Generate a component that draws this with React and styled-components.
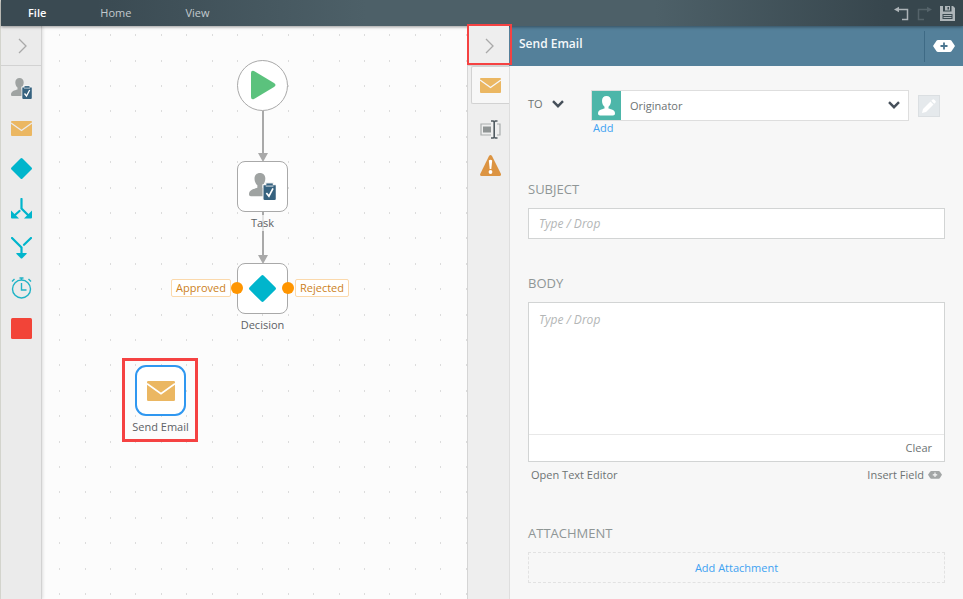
import { useState } from "react";
import styled, { createGlobalStyle } from "styled-components";

const GlobalStyle = createGlobalStyle`
  * {
    box-sizing: border-box;
  }
  body {
    margin: 0;
    font-family: "Open Sans", "Noto Sans", sans-serif;
    font-size: 11px;
    line-height: 16px;
    color: #6d7373;
  }
  button, input, select, textarea {
    font: inherit;
    color: inherit;
  }
  svg {
    display: block;
  }
`;

const Page = styled.div`
  min-height: 100vh;
  display: flex;
  flex-direction: column;
  border-left: 1px solid #d8d9d2;
`;

const MenuBar = styled.header`
  height: 26px;
  padding: 0 8px 0 27px;
  display: flex;
  align-items: center;
  justify-content: space-between;
  background: linear-gradient(to right, #3a4a52 10%, #4d6068 38%, #4d6068 68%, #37464d 92%);
  box-shadow: 0 1px 3px rgba(0, 0, 0, 0.4);
  position: relative;
  z-index: 2;
`;

const Menu = styled.nav`
  display: flex;
  gap: 54px;
`;

const IconButton = styled.button`
  display: flex;
  align-items: center;
  justify-content: center;
  padding: 0;
  border: none;
  background: none;
  cursor: pointer;
`;

const MenuItem = styled(IconButton)`
  font-weight: ${(props) => (props.$active ? 600 : 400)};
  color: ${(props) => (props.$active ? "#ffffff" : "#c3cace")};
`;

const MenuActions = styled.div`
  display: flex;
  align-items: center;
  gap: 8px;
`;

const Workspace = styled.main`
  flex: 1;
  display: grid;
  grid-template-columns: 41px minmax(0, 425fr) 42px minmax(0, 454fr);
`;

const Toolbar = styled.aside`
  background-color: #ebebeb;
  border-right: 1px solid #d2d2d2;
  box-shadow: 1px 0 3px rgba(0, 0, 0, 0.12);
  position: relative;
  z-index: 1;
`;

const Collapse = styled(IconButton)`
  width: 100%;
  height: 40px;
  padding-left: 2px;
  border-bottom: 1px solid #d2d2d2;
`;

const ToolList = styled.div`
  display: flex;
  flex-direction: column;
  padding: 2px 0 0 1px;
`;

const Tool = styled(IconButton)`
  height: 40px;
`;

const Canvas = styled.section`
  position: relative;
  overflow: hidden;
  background-color: #fcfcfc;
`;

const Drawing = styled.svg`
  position: absolute;
  left: 0;
  top: 0;
  width: 100%;
  height: 100%;
`;

const Node = styled.div`
  position: absolute;
  left: ${(props) => props.$x}px;
  top: ${(props) => props.$y}px;
  width: 77px;
  display: flex;
  flex-direction: column;
  align-items: center;
  gap: 3px;
`;

const Shape = styled.div`
  width: 51px;
  height: 51px;
  display: flex;
  align-items: center;
  justify-content: center;
  background-color: #ffffff;
  border: ${(props) => (props.$selected ? "2px solid #2f97f0" : "1px solid #a9a9a9")};
  border-radius: ${(props) => (props.$round ? "50%" : props.$selected ? "11px" : "8px")};
`;

const NodeLabel = styled.span`
  color: #5c6165;
  background-color: rgba(252, 252, 252, 0.7);
`;

const Outcome = styled.span`
  position: absolute;
  left: ${(props) => props.$x}px;
  top: 253px;
  height: 18px;
  padding: 0 4px;
  border: 1px solid #fbd9ac;
  border-radius: 2px;
  background-color: #ffffff;
  color: #cc7f1c;
`;

const Dot = styled.span`
  position: absolute;
  left: ${(props) => props.$x}px;
  top: 256px;
  width: 12px;
  height: 12px;
  border-radius: 50%;
  background-color: #ff9500;
`;

const NodeFrame = styled.div`
  position: absolute;
  left: 80px;
  top: 332px;
  width: 76px;
  height: 84px;
  border: 3px solid #f54242;
`;

const Rail = styled.aside`
  display: flex;
  flex-direction: column;
  align-items: flex-end;
  position: relative;
  z-index: 3;
  background: linear-gradient(to right, #d5d5d5 1px, #eeeeee 1px);
`;

const RailTab = styled(IconButton)`
  width: 38px;
  height: ${(props) => (props.$active ? 38 : 36)}px;
  margin-bottom: ${(props) => (props.$active ? 7 : 0)}px;
  background-color: ${(props) => (props.$active ? "#f7f7f7" : "transparent")};
  border: ${(props) => (props.$active ? "1px solid #d2d2d2" : "none")};
  border-right: none;
  border-radius: 2px 0 0 2px;
`;

const CollapseFrame = styled.span`
  position: absolute;
  left: 0;
  top: -2px;
  width: 45px;
  height: 41px;
  border: 2px solid #f54242;
  pointer-events: none;
`;

const Panel = styled.section`
  background-color: #f7f7f7;
  display: flex;
  flex-direction: column;
  border-left: 1px solid #dedede;
`;

const PanelHeader = styled.div`
  height: 40px;
  margin-left: -1px;
  padding-left: 10px;
  display: flex;
  align-items: center;
  justify-content: space-between;
  background-color: #54809a;
`;

const PanelTitle = styled.h1`
  margin: 0 0 4px;
  font-size: 12px;
  font-weight: 600;
  color: #f4f8fa;
`;

const AddField = styled(IconButton)`
  width: 39px;
  height: 31px;
  border-left: 1px solid #3e6a85;
`;

const Form = styled.form`
  padding: 24px 18px 16px;
  display: flex;
  flex-direction: column;
`;

const Recipient = styled.div`
  display: grid;
  grid-template-columns: 63px minmax(0, 1fr) 22px;
  padding-right: 5px;
`;

const ToButton = styled(IconButton)`
  justify-content: flex-start;
  gap: 9px;
  height: 27px;
`;

const SelectBox = styled.div`
  position: relative;
  display: flex;
  height: 31px;
  margin-right: 9px;
  border: 1px solid #dedede;
  background-color: #ffffff;
`;

const Avatar = styled.span`
  flex: none;
  width: 29px;
  display: flex;
  align-items: center;
  justify-content: center;
  background-color: #4db6a9;
`;

const Select = styled.select`
  appearance: none;
  flex: 1;
  padding: 0 36px 0 9px;
  border: none;
  background: none;
`;

const SelectArrow = styled.span`
  position: absolute;
  right: 8px;
  top: 10px;
  pointer-events: none;
`;

const EditButton = styled(IconButton)`
  width: 22px;
  height: 22px;
  align-self: center;
  border: 1px solid #dbdfe2;
  background-color: #e5e9ec;
`;

const AddLink = styled.a`
  grid-column: 2;
  justify-self: start;
  padding-left: 2px;
  line-height: 14px;
  color: #3ea2f2;
  text-decoration: none;
`;

const Field = styled.div`
  display: flex;
  flex-direction: column;
  margin-top: ${(props) => props.$gap}px;
`;

const Label = styled.label`
  margin-bottom: 9px;
  line-height: 20px;
  font-size: 13px;
  color: #8f9696;
`;

const Input = styled.input`
  height: 31px;
  padding: 0 10px;
  border: 1px solid #d2d4d4;
  background-color: #ffffff;
  font-size: 12px;
  &::placeholder {
    color: #b3b6b6;
    font-style: italic;
  }
`;

const Editor = styled.div`
  border: 1px solid #d2d4d4;
  background-color: #ffffff;
`;

const TextArea = styled.textarea`
  display: block;
  width: 100%;
  height: 131px;
  padding: 9px 10px;
  border: none;
  resize: none;
  font-size: 12px;
  &::placeholder {
    color: #b3b6b6;
    font-style: italic;
  }
`;

const EditorFooter = styled.div`
  height: 27px;
  padding: 0 12px;
  display: flex;
  justify-content: flex-end;
  border-top: 1px solid #e8e8e8;
`;

const TextButton = styled(IconButton)`
  gap: 4px;
`;

const EditorLinks = styled.div`
  height: 20px;
  margin-top: 3px;
  padding: 0 3px;
  display: flex;
  justify-content: space-between;
`;

const AddAttachment = styled(TextButton)`
  height: 31px;
  border: 1px dashed #e2e2e2;
  color: #3ea2f2;
`;

const EnvelopeIcon = ({ width = 21, back = "#ebebeb" }) => (
  <svg width={width} viewBox="0 0 21 15">
    <rect width="21" height="15" rx="1" fill="#ebb762" />
    <path d="M0 2l10.5 7.5L21 2" fill="none" stroke={back} strokeWidth="1.4" />
  </svg>
);

const TaskIcon = ({ width = 21 }) => (
  <svg width={width} viewBox="0 0 21 21">
    <path
      d="M8.500 0c2.500 0 4.200 1.700 4.200 4.200 0 2.400-1 4.300-2.200 5.300v2l2.500 1V18H1.500C.5 18 0 17.500 0 16.500c0-3.500 3.500-4 6.500-5v-2C5.300 8.500 4.300 6.600 4.300 4.200 4.300 1.700 6 0 8.500 0z"
      fill="#9fa3a2"
    />
    <path d="M10.500 8.500h2V7h7v1.500H22V22H10.500z" fill="#f4f4f4" />
    <path d="M11.300 9.500h9.500v10.500q0 1-1 1h-7.500q-1 0-1-1z" fill="#36627f" />
    <path d="M13.500 8.100h5v1.800h-5z" fill="#36627f" />
    <path d="M13 10.200h6" stroke="#fff" strokeWidth=".6" />
    <path d="M13.500 15.500l2 2.500 3.200-6" fill="none" stroke="#fff" strokeWidth="1.300" />
  </svg>
);

const DiamondIcon = ({ width = 21 }) => (
  <svg width={width} viewBox="0 0 21 21">
    <path d="M9.500 .5q1-1 2 0l9 9q1 1 0 2l-9 9q-1 1-2 0l-9-9q-1-1 0-2z" fill="#00b5cc" />
  </svg>
);

const SplitIcon = () => (
  <svg width="21" height="21" viewBox="0 0 21 21">
    <path d="M10.500 1v9.500l7 7M8.500 13L4 17" fill="none" stroke="#00b5cc" strokeWidth="2.200" strokeLinecap="round" />
    <path d="M0 12.500L8 20.500H1q-1 0-1-1zM21 12.500L13 20.500h7q1 0 1-1z" fill="#00b5cc" />
  </svg>
);

const MergeIcon = () => (
  <svg width="21" height="22" viewBox="0 0 21 22">
    <path d="M1 1l9.500 9.500V17M20 1l-7 6.800" fill="none" stroke="#00b5cc" strokeWidth="2.200" strokeLinecap="round" />
    <path d="M5.500 16h10q.5 0 0 1L11 21.500h-1L5.500 17q-.5-1 0-1z" fill="#00b5cc" />
  </svg>
);

const ClockIcon = () => (
  <svg width="21" height="22" viewBox="0 0 21 22" fill="none" stroke="#1fb3c6" strokeWidth="1.400">
    <circle cx="10.500" cy="12" r="9" />
    <path d="M10.500 6v7h5M8.500 1h4M10.500 1v2M1 4.500L3.500 2M20 4.500L17.500 2" />
  </svg>
);

const StopIcon = () => (
  <svg width="21" height="21" viewBox="0 0 21 21">
    <rect width="21" height="21" rx="1.500" fill="#f24438" />
  </svg>
);

const ChevronRight = () => (
  <svg width="9" height="16" viewBox="0 0 9 16" fill="none" stroke="#a9a9a9" strokeWidth="1.300">
    <path d="M1 1l7 7-7 7" />
  </svg>
);

const ChevronDown = () => (
  <svg width="12" height="8" viewBox="0 0 12 8" fill="none" stroke="#46505a" strokeWidth="2.400">
    <path d="M1 1.200l5 5 5-5" />
  </svg>
);

const UndoIcon = ({ flip, color }) => (
  <svg width="15" height="15" viewBox="0 0 15 15">
    <g transform={flip ? "translate(15 0) scale(-1 1)" : undefined}>
      <path d="M3 3.500h10.500v10H8" fill="none" stroke={color} strokeWidth="1.500" />
      <path d="M0 3.500L5 .7v5.600z" fill={color} />
    </g>
  </svg>
);

const SaveIcon = () => (
  <svg width="15" height="15" viewBox="0 0 15 15">
    <path d="M0 0h3v5.500h8.500V0H13l2 2v13H0z" fill="#adb4b8" />
    <path d="M5 0h5v4.500H5z" fill="#adb4b8" />
    <path d="M7.500 1h1.500v2.500H7.500z" fill="#3a4950" />
    <path d="M2.500 8h10v5h-10z" fill="#3a4950" />
    <path d="M3.500 9.500h8M3.500 11.500h8" stroke="#adb4b8" />
  </svg>
);

const FieldIcon = ({ width, color, plus }) => (
  <svg width={width} viewBox="0 0 22 12">
    <path d="M5 0h12q1 0 1.500.7L22 6l-3.500 5.300q-.5.7-1.500.7H5q-1 0-1.500-.7L0 6 3.500.7Q4 0 5 0z" fill={color} />
    <path d="M11 2.500v7M7.500 6h7" stroke={plus} strokeWidth="1.800" />
  </svg>
);

const RenameIcon = () => (
  <svg width="21" height="19" viewBox="0 0 21 19" fill="none">
    <path d="M11 4H1v11h10M17 4h3v11h-3" stroke="#a9adad" strokeWidth="1.200" />
    <path d="M3 6.500h8v6H3z" fill="#8f9494" />
    <path d="M11 1h2.200l1 1 1-1h2.300M11 18h2.200l1-1 1 1h2.300M14.200 2v15" stroke="#515b61" strokeWidth="1.600" />
  </svg>
);

const WarningIcon = () => (
  <svg width="21" height="21" viewBox="0 0 21 21">
    <path d="M9 1q1.500-1.800 3 0l9 18q.3 2-1.500 2h-18Q-.3 21 .2 19z" fill="#dc9442" />
    <path d="M8.800 5.500q1.700-1.500 3.400 0l-.9 8.500H9.700z" fill="#fff" />
    <circle cx="10.500" cy="17" r="1.900" fill="#fff" />
  </svg>
);

const PersonIcon = () => (
  <svg width="17" height="20" viewBox="0 0 17 20">
    <path
      d="M8.500 0c2.800 0 4.500 1.800 4.500 4.800 0 2.700-1.200 5-2.500 6v1.700c3 .8 6.500 1.500 6.500 5 0 2-2 2-3 2H3c-1 0-3 0-3-2 0-3.500 3.500-4.200 6.500-5v-1.700C5.200 9.800 4 7.500 4 4.800 4 1.800 5.700 0 8.500 0z"
      fill="#fff"
    />
  </svg>
);

const PencilIcon = () => (
  <svg width="14" height="14" viewBox="0 0 14 14" fill="#fff">
    <path d="M0 14l1-4L8.500 2.500 11.500 5.500 4 13zM9.300 1.700l1-1q1-1 2 0l1 1q1 1 0 2l-1 1z" />
  </svg>
);

const tools = [
  { name: "Task", icon: <TaskIcon /> },
  { name: "Send Email", icon: <EnvelopeIcon /> },
  { name: "Decision", icon: <DiamondIcon /> },
  { name: "Split", icon: <SplitIcon /> },
  { name: "Merge", icon: <MergeIcon /> },
  { name: "Timer", icon: <ClockIcon /> },
  { name: "End", icon: <StopIcon /> },
];

const App = () => {
  const [subject, setSubject] = useState("");
  const [body, setBody] = useState("");

  return (
    <>
      <GlobalStyle />
      <Page>
        <MenuBar>
          <Menu>
            <MenuItem $active>File</MenuItem>
            <MenuItem>Home</MenuItem>
            <MenuItem>View</MenuItem>
          </Menu>
          <MenuActions>
            <IconButton aria-label="Undo"><UndoIcon color="#adb4b8" /></IconButton>
            <IconButton aria-label="Redo"><UndoIcon flip color="#55636a" /></IconButton>
            <IconButton aria-label="Save"><SaveIcon /></IconButton>
          </MenuActions>
        </MenuBar>
        <Workspace>
          <Toolbar>
            <Collapse aria-label="Expand toolbar"><ChevronRight /></Collapse>
            <ToolList>
              {tools.map((tool) => (
                <Tool key={tool.name} aria-label={tool.name}>{tool.icon}</Tool>
              ))}
            </ToolList>
          </Toolbar>
          <Canvas>
            <Drawing>
              <defs>
                {/* five dots per 127px keeps the grid on whole pixels */}
                <pattern id="grid" x="17" y="8" width="127" height="127" patternUnits="userSpaceOnUse">
                  {[0, 26, 51, 76, 102].map((y) =>
                    [0, 26, 51, 76, 102].map((x) => (
                      <rect key={`${x}-${y}`} x={x} y={y} width="1" height="2" fill="#dcdcdc" />
                    ))
                  )}
                </pattern>
              </defs>
              <rect width="100%" height="100%" fill="url(#grid)" />
              <g stroke="#a9a9a9" strokeWidth="2">
                <path d="M221 85v44M221 186v44" />
              </g>
              <path d="M216 127h10l-5 9zM216 229h10l-5 9z" fill="#a9a9a9" />
            </Drawing>
            <Node $x={182} $y={34}>
              <Shape $round>
                <svg width="27" height="31" viewBox="0 0 27 31">
                  <path d="M2 3q0-3 3-2l20 12q3 2 0 4L5 29q-3 1-3-2z" fill="#5bc27d" />
                </svg>
              </Shape>
            </Node>
            <Node $x={182} $y={135}>
              <Shape><TaskIcon width={27} /></Shape>
              <NodeLabel>Task</NodeLabel>
            </Node>
            <Node $x={182} $y={237}>
              <Shape><DiamondIcon width={27} /></Shape>
              <NodeLabel>Decision</NodeLabel>
            </Node>
            <Outcome $x={129}>Approved</Outcome>
            <Dot $x={189} />
            <Dot $x={240} />
            <Outcome $x={253}>Rejected</Outcome>
            <Node $x={80} $y={339}>
              <Shape $selected><EnvelopeIcon width={28} back="#ffffff" /></Shape>
              <NodeLabel>Send Email</NodeLabel>
            </Node>
            <NodeFrame />
          </Canvas>
          <Rail>
            <Collapse aria-label="Collapse panel"><ChevronRight /></Collapse>
            <CollapseFrame />
            <RailTab $active aria-label="Email"><EnvelopeIcon back="#f7f7f7" /></RailTab>
            <RailTab aria-label="Rename"><RenameIcon /></RailTab>
            <RailTab aria-label="Warnings"><WarningIcon /></RailTab>
          </Rail>
          <Panel>
            <PanelHeader>
              <PanelTitle>Send Email</PanelTitle>
              <AddField aria-label="Add field"><FieldIcon width={22} color="#ffffff" plus="#4b7690" /></AddField>
            </PanelHeader>
            <Form onSubmit={(e) => e.preventDefault()}>
              <Recipient>
                <ToButton type="button">TO <ChevronDown /></ToButton>
                <SelectBox>
                  <Avatar><PersonIcon /></Avatar>
                  <Select aria-label="Recipient" defaultValue="Originator">
                    <option>Originator</option>
                  </Select>
                  <SelectArrow><ChevronDown /></SelectArrow>
                </SelectBox>
                <EditButton type="button" aria-label="Edit recipient"><PencilIcon /></EditButton>
                <AddLink href="#add">Add</AddLink>
              </Recipient>
              <Field $gap={44}>
                <Label htmlFor="subject">SUBJECT</Label>
                <Input
                  id="subject"
                  placeholder="Type / Drop"
                  value={subject}
                  onChange={(e) => setSubject(e.target.value)}
                />
              </Field>
              <Field $gap={34}>
                <Label htmlFor="body">BODY</Label>
                <Editor>
                  <TextArea
                    id="body"
                    placeholder="Type / Drop"
                    value={body}
                    onChange={(e) => setBody(e.target.value)}
                  />
                  <EditorFooter>
                    <TextButton type="button" onClick={() => setBody("")}>Clear</TextButton>
                  </EditorFooter>
                </Editor>
                <EditorLinks>
                  <TextButton type="button">Open Text Editor</TextButton>
                  <TextButton type="button">
                    Insert Field <FieldIcon width={14} color="#a3a6a6" plus="#f7f7f7" />
                  </TextButton>
                </EditorLinks>
              </Field>
              <Field $gap={38}>
                <Label as="span">ATTACHMENT</Label>
                <AddAttachment type="button">Add Attachment</AddAttachment>
              </Field>
            </Form>
          </Panel>
        </Workspace>
      </Page>
    </>
  );
};

export default App;
